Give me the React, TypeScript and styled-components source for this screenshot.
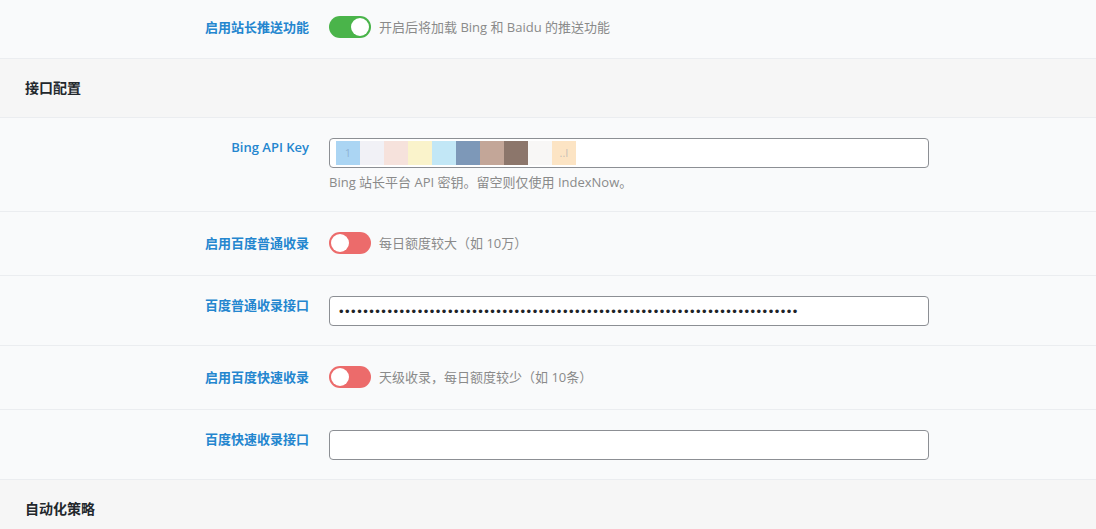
import React, { ReactElement } from 'react';
import styled, { createGlobalStyle } from 'styled-components';

const GlobalStyle = createGlobalStyle`
  html, body {
    margin: 0;
    padding: 0;
    background: #f9fafb;
    font-family: "Open Sans", "Noto Sans CJK SC", sans-serif;
  }
`;

const Page = styled.div`
  width: 1096px;
  background: #f9fafb;
`;

const SectionHeader = styled.div`
  background: #f6f6f6;
  border-bottom: 1px solid #ebedf0;
  padding: 19px 25px 19px;
  font-size: 14px;
  line-height: 20px;
  font-weight: 700;
  color: #23282d;
`;

const Row = styled.div<{ $top?: number; $bottom?: number }>`
  display: flex;
  align-items: flex-start;
  gap: 20px;
  padding: ${(p) => p.$top ?? 20}px 0 ${(p) => p.$bottom ?? 20}px;
  border-bottom: 1px solid #ebedf0;
`;

const Label = styled.div<{ $lh: number }>`
  width: 309px;
  flex: none;
  text-align: right;
  font-size: 13px;
  font-weight: 600;
  line-height: ${(p) => p.$lh}px;
  color: #2486cf;
  white-space: nowrap;
`;

const Control = styled.div`
  display: flex;
  flex-direction: column;
`;

const SwitchLine = styled.div`
  display: flex;
  align-items: center;
  gap: 8px;
  height: 22px;
`;

const Track = styled.span<{ $on: boolean }>`
  position: relative;
  width: 42px;
  height: 22px;
  border-radius: 11px;
  background: ${(p) => (p.$on ? '#4ab44a' : '#ec6b6b')};
  flex: none;
`;

const Knob = styled.span<{ $on: boolean }>`
  position: absolute;
  top: 2px;
  left: ${(p) => (p.$on ? '22px' : '2px')};
  width: 18px;
  height: 18px;
  border-radius: 50%;
  background: #fff;
`;

const Hint = styled.span`
  font-size: 13px;
  line-height: 20px;
  color: #8a8a8a;
  white-space: nowrap;
`;

const Desc = styled(Hint)`
  margin-top: 5px;
  line-height: 18px;
`;

const Field = styled.div`
  box-sizing: border-box;
  width: 600px;
  height: 30px;
  border: 1px solid #8c8f94;
  border-radius: 4px;
  background: #fff;
  display: flex;
  align-items: center;
  padding: 0 6px;
`;

const PasswordInput = styled.input`
  border: none;
  outline: none;
  background: transparent;
  width: 100%;
  padding: 0 3px;
  font-family: "Liberation Sans", sans-serif;
  font-size: 13px;
  letter-spacing: 1.5px;
  color: #1d2327;
`;

const Mask = styled.div`
  display: flex;
  height: 24px;
`;

const MaskCell = styled.span<{ $c: string }>`
  width: 24px;
  height: 24px;
  background: ${(p) => p.$c};
  font-size: 11px;
  line-height: 24px;
  color: rgba(80, 110, 150, 0.35);
  text-align: center;
`;

const maskColors = [
  '#abd5f3', '#f1f1f6', '#f6e2dc', '#faf3cb', '#c2e7f6',
  '#7d98b8', '#c3a698', '#8c766b', '#f8f7f6', '#fce4c4',
];

const Switch = ({ on, hint }: { on: boolean; hint: string }): ReactElement => (
  <SwitchLine>
    <Track $on={on}>
      <Knob $on={on} />
    </Track>
    <Hint>{hint}</Hint>
  </SwitchLine>
);

const App = (): ReactElement => (
  <Page>
    <GlobalStyle />
    <Row $top={16}>
      <Label $lh={22}>启用站长推送功能</Label>
      <Switch on hint="开启后将加载 Bing 和 Baidu 的推送功能" />
    </Row>

    <SectionHeader>接口配置</SectionHeader>

    <Row>
      <Label $lh={18}>Bing API Key</Label>
      <Control>
        <Field>
          <Mask>
            {maskColors.map((c, i) => (
              <MaskCell key={c} $c={c}>{i === 0 ? '1' : i === 9 ? '..I' : ''}</MaskCell>
            ))}
          </Mask>
        </Field>
        <Desc>Bing 站长平台 API 密钥。留空则仅使用 IndexNow。</Desc>
      </Control>
    </Row>

    <Row $bottom={21}>
      <Label $lh={22}>启用百度普通收录</Label>
      <Switch on={false} hint="每日额度较大（如 10万）" />
    </Row>

    <Row $bottom={19}>
      <Label $lh={18}>百度普通收录接口</Label>
      <Field>
        <PasswordInput type="password" readOnly defaultValue={'x'.repeat(76)} />
      </Field>
    </Row>

    <Row $bottom={21}>
      <Label $lh={22}>启用百度快速收录</Label>
      <Switch on={false} hint="天级收录，每日额度较少（如 10条）" />
    </Row>

    <Row $bottom={19}>
      <Label $lh={18}>百度快速收录接口</Label>
      <Field>
        <PasswordInput type="text" readOnly defaultValue="" />
      </Field>
    </Row>

    <SectionHeader>自动化策略</SectionHeader>
  </Page>
);

export default App;
